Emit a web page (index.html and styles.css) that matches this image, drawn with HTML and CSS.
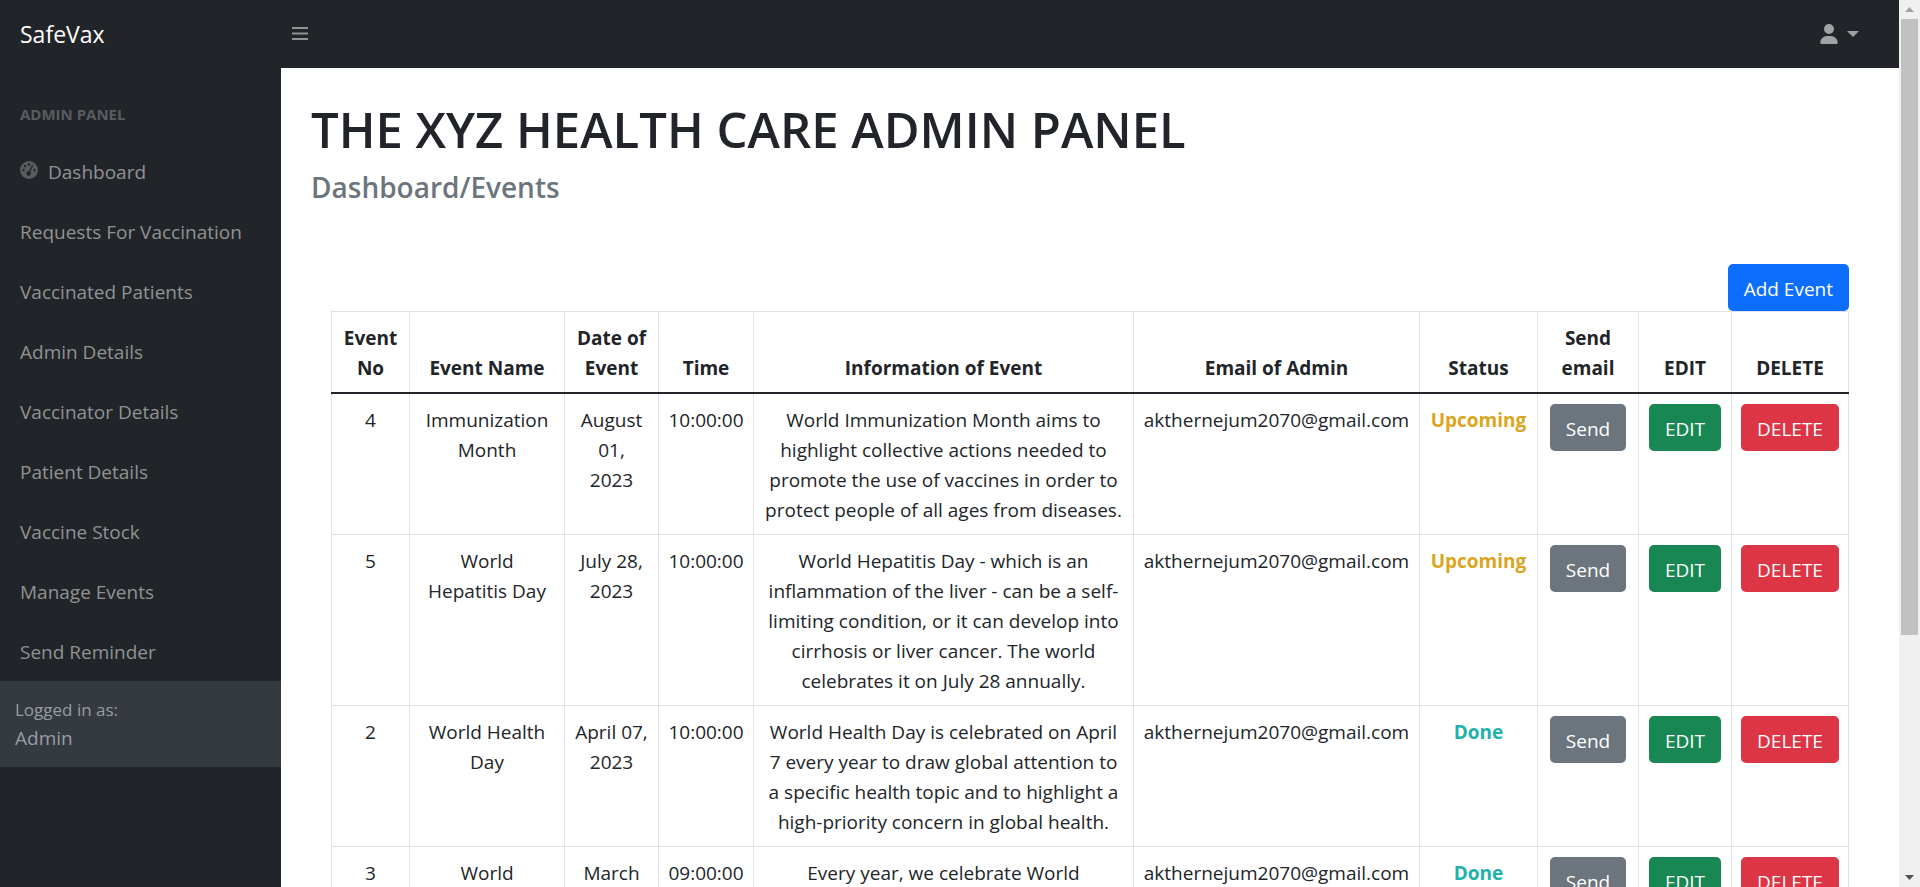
FILE: index.html
```html
<!DOCTYPE html>
<html lang="en">
<head>
<meta charset="utf-8">
<title>SafeVax - Events</title>
<link rel="stylesheet" href="styles.css">
</head>
<body>
<div class="app">
  <header class="topbar">
    <a class="brand" href="#">SafeVax</a>
    <button class="icon-btn" type="button" aria-label="Toggle navigation">
      <svg width="16" height="14" viewBox="0 0 16 14" fill="currentColor"><path d="M0 0h16v2H0zM0 5.500h16v2H0zM0 11h16v2H0z"/></svg>
    </button>
    <button class="icon-btn user-btn" type="button" aria-label="User menu">
      <svg width="18" height="20" viewBox="0 0 448 512" fill="currentColor"><path d="M224 256a128 128 0 1 0 0-256 128 128 0 1 0 0 256zm-45.700 48C79.800 304 0 383.800 0 482.300 0 498.700 13.300 512 29.700 512h388.600c16.400 0 29.700-13.300 29.700-29.700C448 383.800 368.200 304 269.700 304h-91.400z"/></svg>
      <svg width="12" height="6" viewBox="0 0 12 6" fill="currentColor"><path d="M0 0h12L6 6z"/></svg>
    </button>
  </header>
  <div class="body">
    <aside class="sidebar">
      <nav class="menu">
        <div class="menu-heading">ADMIN PANEL</div>
        <a href="#"><svg class="gauge" width="18" height="18" viewBox="0 0 18 18"><circle cx="9" cy="9" r="9" fill="#595c5f"/><g fill="#212529"><circle cx="9" cy="3.500" r="1.300"/><circle cx="5" cy="5" r="1.200"/><circle cx="3.500" cy="9" r="1.200"/><circle cx="14.500" cy="9" r="1.200"/><circle cx="8.600" cy="12.500" r="2.200"/></g><path d="M8.800 12 12.300 5" stroke="#212529" stroke-width="1.400" stroke-linecap="round"/></svg>Dashboard</a>
        <a href="#">Requests For Vaccination</a>
        <a href="#">Vaccinated Patients</a>
        <a href="#">Admin Details</a>
        <a href="#">Vaccinator Details</a>
        <a href="#">Patient Details</a>
        <a href="#">Vaccine Stock</a>
        <a href="#">Manage Events</a>
        <a href="#">Send Reminder</a>
      </nav>
      <div class="login"><div class="login-label">Logged in as:</div>Admin</div>
    </aside>
    <main class="content">
      <h1>THE XYZ HEALTH CARE ADMIN PANEL</h1>
      <h2>Dashboard/Events</h2>
      <section class="events">
        <button class="btn add" type="button">Add Event</button>
        <table>
          <colgroup><col class="c-no"><col class="c-name"><col class="c-date"><col class="c-time"><col class="c-info"><col class="c-mail"><col class="c-status"><col class="c-send"><col class="c-edit"><col class="c-delete"></colgroup>
          <thead>
            <tr><th>Event No</th><th>Event Name</th><th>Date of Event</th><th>Time</th><th>Information of Event</th><th>Email of Admin</th><th>Status</th><th>Send email</th><th>EDIT</th><th>DELETE</th></tr>
          </thead>
          <tbody>
            <tr><td>4</td><td>Immunization Month</td><td>August 01, 2023</td><td>10:00:00</td><td>World Immunization Month aims to highlight collective actions needed to promote the use of vaccines in order to protect people of all ages from diseases.</td><td>akthernejum2070@gmail.com</td><td class="upcoming">Upcoming</td><td class="action"><button class="btn send" type="button">Send</button></td><td class="action"><button class="btn edit" type="button">EDIT</button></td><td class="action"><button class="btn delete" type="button">DELETE</button></td></tr>
            <tr><td>5</td><td>World Hepatitis&nbsp;Day</td><td>July 28, 2023</td><td>10:00:00</td><td>World Hepatitis Day - which is an inflammation of the liver - can be a self-limiting condition, or it can develop into cirrhosis or liver cancer. The world celebrates it on July 28 annually.</td><td>akthernejum2070@gmail.com</td><td class="upcoming">Upcoming</td><td class="action"><button class="btn send" type="button">Send</button></td><td class="action"><button class="btn edit" type="button">EDIT</button></td><td class="action"><button class="btn delete" type="button">DELETE</button></td></tr>
            <tr><td>2</td><td>World Health Day</td><td>April 07, 2023</td><td>10:00:00</td><td>World Health Day is celebrated on April 7 every year to draw global attention to a specific health topic and to highlight a high-priority concern in global health.</td><td>akthernejum2070@gmail.com</td><td class="done">Done</td><td class="action"><button class="btn send" type="button">Send</button></td><td class="action"><button class="btn edit" type="button">EDIT</button></td><td class="action"><button class="btn delete" type="button">DELETE</button></td></tr>
            <tr><td>3</td><td>World</td><td>March</td><td>09:00:00</td><td>Every year, we celebrate World</td><td>akthernejum2070@gmail.com</td><td class="done">Done</td><td class="action"><button class="btn send" type="button">Send</button></td><td class="action"><button class="btn edit" type="button">EDIT</button></td><td class="action"><button class="btn delete" type="button">DELETE</button></td></tr>
          </tbody>
        </table>
      </section>
    </main>
  </div>
</div>
<div class="scrollbar" aria-hidden="true">
  <svg width="9" height="5" viewBox="0 0 9 5" fill="#a3a3a3"><path d="M0 5h9L4.500 0z"/></svg>
  <div class="track"><div class="thumb"></div></div>
  <svg width="9" height="5" viewBox="0 0 9 5" fill="#505050"><path d="M0 0h9L4.500 5z"/></svg>
</div>
</body>
</html>
```
FILE: styles.css
```css
* { box-sizing: border-box; }

body {
  margin: 0;
  height: 100vh;
  display: flex;
  overflow: hidden;
  background: #fff;
  color: #212529;
  font-family: "Segoe UI", "Open Sans", "Noto Sans", sans-serif;
  font-size: 19px;
  line-height: 30px;
}

a { color: inherit; text-decoration: none; }
button { font: inherit; cursor: pointer; }

.app { flex: 1; min-width: 0; display: flex; flex-direction: column; }

.topbar {
  flex: none;
  height: 68px;
  display: flex;
  align-items: center;
  background: #212529;
  color: #909294;
}
.brand { width: 281px; padding-left: 20px; color: #fff; font-size: 23px; }
.icon-btn {
  display: flex;
  align-items: center;
  gap: 9px;
  padding: 10px 11px;
  border: 0;
  background: none;
  color: inherit;
}
.user-btn { margin-left: auto; padding-right: 40px; color: #a0a2a4; }

.body { flex: 1; min-height: 0; display: flex; }

.sidebar { flex: none; width: 281px; background: #212529; color: #909294; }
.menu { display: flex; flex-direction: column; }
.menu-heading {
  padding: 35px 20px 16px;
  color: #595c5f;
  font-size: 15px;
  font-weight: 700;
  line-height: 22px;
}
.menu a { display: flex; padding: 16px 20px 14px; }
.gauge { margin: 4px 10px 0 0; }
.login { padding: 16px 15px 14px; background: #343a40; color: #999da0; }
.login-label { font-size: 17px; line-height: 26px; }

.content { flex: 1; min-width: 0; padding: 31px 30px 0; overflow: hidden; }
h1 { margin: 0 0 10px; font-size: 49px; font-weight: 600; line-height: 60px; }
h2 { margin: 0; color: #6c757d; font-size: 28px; font-weight: 600; line-height: 36px; }

.events { display: flex; flex-direction: column; padding: 59px 20px 0; }

.btn {
  padding: 9px 15px 6px;
  border: 1px solid transparent;
  border-radius: 5px;
  color: #fff;
}
.add { align-self: flex-end; background: #0d6efd; }
.send { background: #6c757d; }
.edit { background: #198754; }
.delete { background: #dc3545; }

table { width: 100%; border-collapse: collapse; table-layout: fixed; text-align: center; }
th, td { padding: 11px 9px 9px; border: 1px solid #dee2e6; vertical-align: top; }
th { vertical-align: bottom; font-weight: 700; }
thead th { border-bottom: 2px solid #212529; }
.action { padding-top: 10px; }
.action .btn { display: block; margin: 0 auto; }
.upcoming { color: #daa520; font-weight: 700; }
.done { color: #20b2aa; font-weight: 700; }

.c-no { width: 78px; }
.c-name { width: 155px; }
.c-date { width: 94px; }
.c-time { width: 95px; }
.c-info { width: auto; }
.c-mail { width: 286px; }
.c-status { width: 118px; }
.c-send { width: 101px; }
.c-edit { width: 93px; }
.c-delete { width: 117px; }

.scrollbar {
  flex: none;
  width: 21px;
  padding: 7px 2px;
  display: flex;
  flex-direction: column;
  align-items: center;
  gap: 7px;
  background: #f0f0f0;
}
.track { flex: 1; width: 17px; }
.thumb { height: 616px; background: #c1c1c1; }
```
